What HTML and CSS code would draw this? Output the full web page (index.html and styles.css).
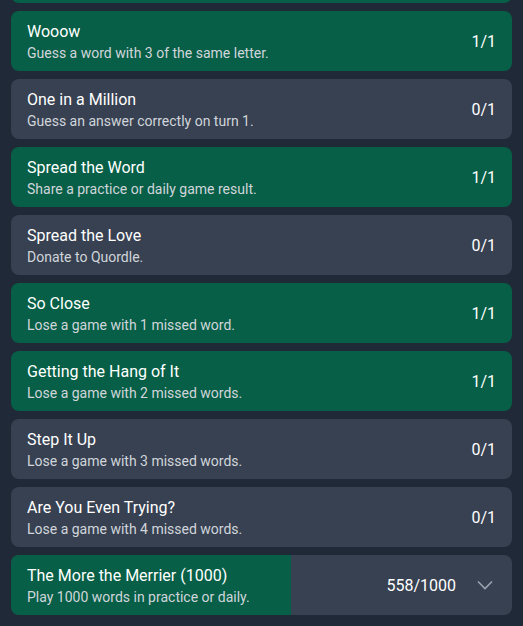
FILE: index.html
```html
<!DOCTYPE html>
<html>
<head>
<meta charset="utf-8">
<link rel="stylesheet" href="styles.css">
</head>
<body>
<div class="list">
  <div class="card done"></div>
  <div class="card done"><div class="text"><div class="title">Wooow</div><div class="desc">Guess a word with 3 of the same letter.</div></div><div class="count">1/1</div></div>
  <div class="card"><div class="text"><div class="title">One in a Million</div><div class="desc">Guess an answer correctly on turn 1.</div></div><div class="count">0/1</div></div>
  <div class="card done"><div class="text"><div class="title">Spread the Word</div><div class="desc">Share a practice or daily game result.</div></div><div class="count">1/1</div></div>
  <div class="card"><div class="text"><div class="title">Spread the Love</div><div class="desc">Donate to Quordle.</div></div><div class="count">0/1</div></div>
  <div class="card done"><div class="text"><div class="title">So Close</div><div class="desc">Lose a game with 1 missed word.</div></div><div class="count">1/1</div></div>
  <div class="card done"><div class="text"><div class="title">Getting the Hang of It</div><div class="desc">Lose a game with 2 missed words.</div></div><div class="count">1/1</div></div>
  <div class="card"><div class="text"><div class="title">Step It Up</div><div class="desc">Lose a game with 3 missed words.</div></div><div class="count">0/1</div></div>
  <div class="card"><div class="text"><div class="title">Are You Even Trying?</div><div class="desc">Lose a game with 4 missed words.</div></div><div class="count">0/1</div></div>
  <div class="card progress">
    <div class="bar" style="width: 55.8%"></div>
    <div class="text"><div class="title">The More the Merrier (1000)</div><div class="desc">Play 1000 words in practice or daily.</div></div>
    <div class="count">558/1000</div>
    <svg class="chev" width="16" height="10" viewBox="0 0 16 10"><path d="M1 1.5 L8 8.5 L15 1.5" fill="none" stroke="#9ca3af" stroke-width="1.6"/></svg>
  </div>
</div>
</body>
</html>
```
FILE: styles.css
```css
html, body {
  margin: 0;
  padding: 0;
  background: #1f2937;
  font-family: Roboto, "Liberation Sans", sans-serif;
  overflow: hidden;
}
.list {
  display: flex;
  flex-direction: column;
  gap: 8px;
  padding: 0 11px;
  margin-top: -57px;
}
.card {
  position: relative;
  display: flex;
  align-items: center;
  height: 60px;
  box-sizing: border-box;
  padding: 0 16px;
  border-radius: 8px;
  background: #374151;
  color: #fff;
  overflow: hidden;
}
.card.done {
  background: #065f46;
}
.text {
  flex: 1;
  position: relative;
}
.title {
  font-size: 16px;
  line-height: 24px;
  padding-top: 1px;
}
.desc {
  font-size: 14px;
  line-height: 20px;
  margin-top: -1px;
  color: #d1d5db;
}
.count {
  position: relative;
  font-size: 16px;
}
.bar {
  position: absolute;
  left: 0;
  top: 0;
  bottom: 0;
  background: #065f46;
}
.progress {
  padding-right: 19px;
}
.chev {
  position: relative;
  margin-left: 21px;
}
```
